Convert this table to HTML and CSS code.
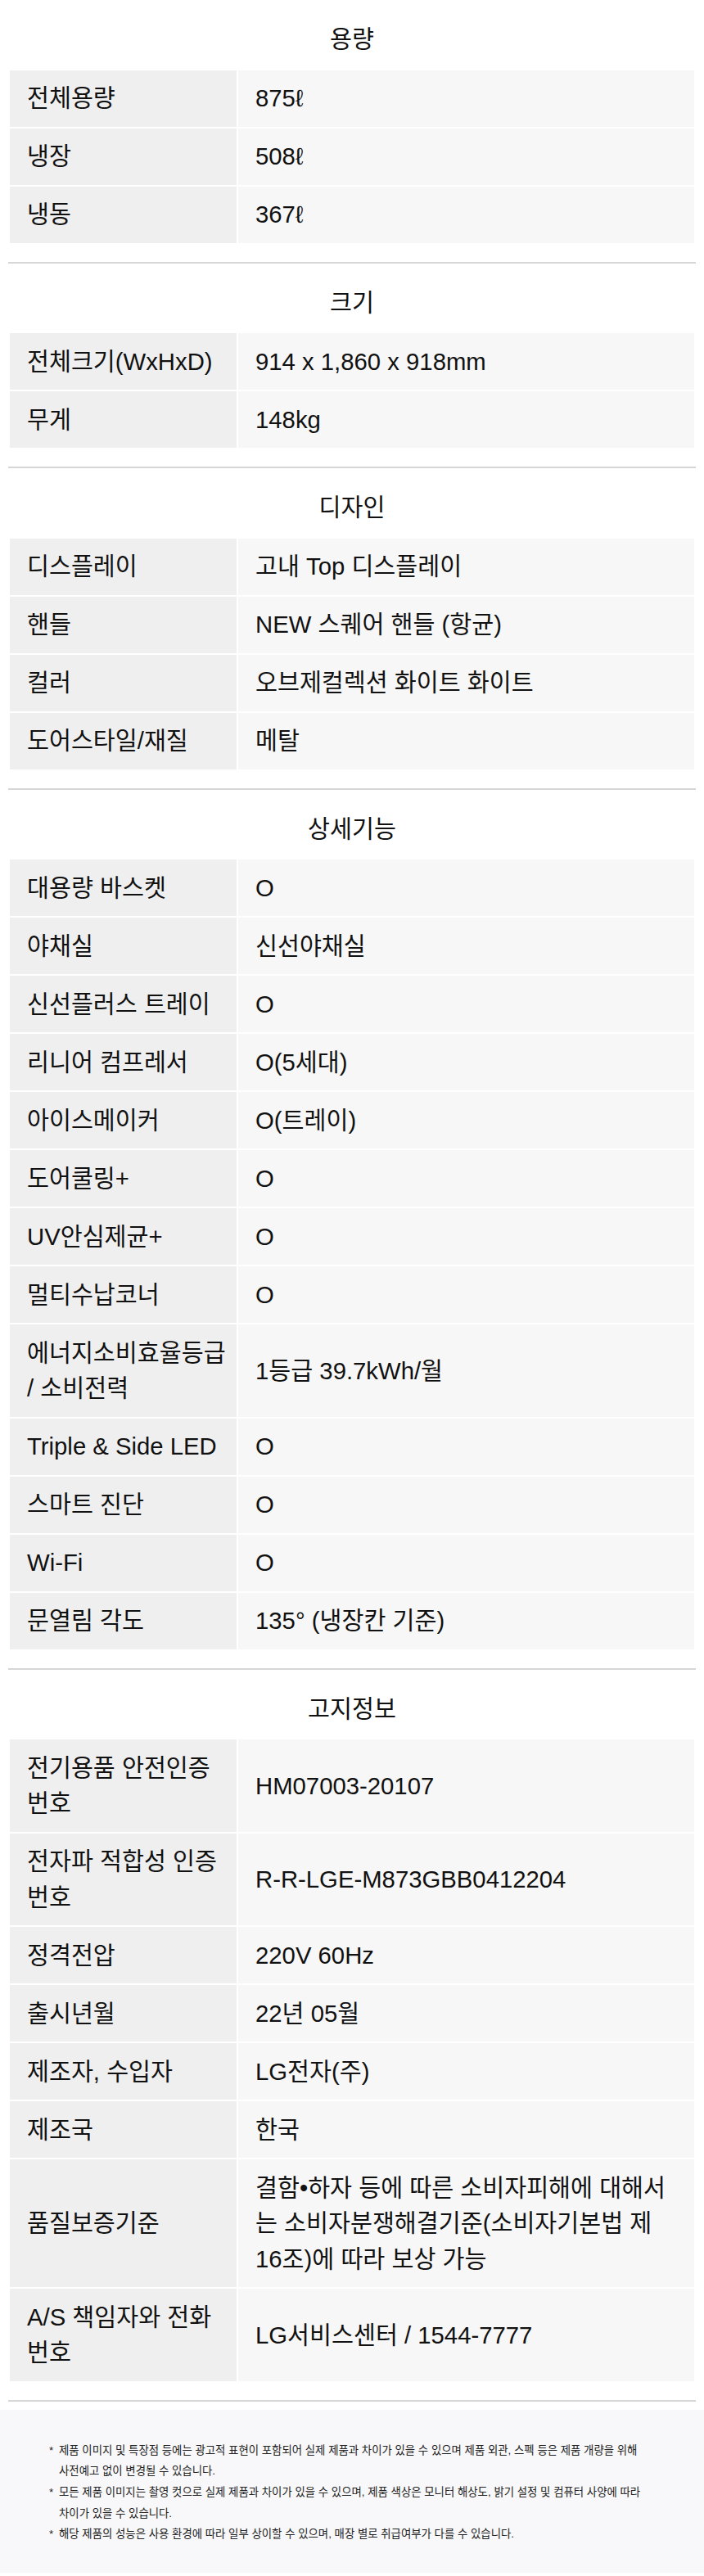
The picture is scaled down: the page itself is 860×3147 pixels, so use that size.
FILE: index.html
```html
<!DOCTYPE html>
<html lang="ko">
<head>
<meta charset="utf-8">
<title>제품 사양</title>
<link rel="stylesheet" href="styles.css">
</head>
<body>
<div class="spec">
  <section class="spec-section">
    <h2 class="spec-title">용량</h2>
    <table class="spec-table">
      <tr><th class="spec-label">전체용량</th><td class="spec-value">875ℓ</td></tr>
      <tr><th class="spec-label">냉장</th><td class="spec-value">508ℓ</td></tr>
      <tr><th class="spec-label">냉동</th><td class="spec-value">367ℓ</td></tr>
    </table>
  </section>

  <section class="spec-section">
    <h2 class="spec-title">크기</h2>
    <table class="spec-table">
      <tr><th class="spec-label">전체크기(WxHxD)</th><td class="spec-value">914 x 1,860 x 918mm</td></tr>
      <tr><th class="spec-label">무게</th><td class="spec-value">148kg</td></tr>
    </table>
  </section>

  <section class="spec-section">
    <h2 class="spec-title">디자인</h2>
    <table class="spec-table">
      <tr><th class="spec-label">디스플레이</th><td class="spec-value">고내 Top 디스플레이</td></tr>
      <tr><th class="spec-label">핸들</th><td class="spec-value">NEW 스퀘어 핸들 (항균)</td></tr>
      <tr><th class="spec-label">컬러</th><td class="spec-value">오브제컬렉션 화이트 화이트</td></tr>
      <tr><th class="spec-label">도어스타일/재질</th><td class="spec-value">메탈</td></tr>
    </table>
  </section>

  <section class="spec-section">
    <h2 class="spec-title">상세기능</h2>
    <table class="spec-table">
      <tr><th class="spec-label">대용량 바스켓</th><td class="spec-value">O</td></tr>
      <tr><th class="spec-label">야채실</th><td class="spec-value">신선야채실</td></tr>
      <tr><th class="spec-label">신선플러스 트레이</th><td class="spec-value">O</td></tr>
      <tr><th class="spec-label">리니어 컴프레서</th><td class="spec-value">O(5세대)</td></tr>
      <tr><th class="spec-label">아이스메이커</th><td class="spec-value">O(트레이)</td></tr>
      <tr><th class="spec-label">도어쿨링+</th><td class="spec-value">O</td></tr>
      <tr><th class="spec-label">UV안심제균+</th><td class="spec-value">O</td></tr>
      <tr><th class="spec-label">멀티수납코너</th><td class="spec-value">O</td></tr>
      <tr><th class="spec-label">에너지소비효율등급 / 소비전력</th><td class="spec-value">1등급 39.7kWh/월</td></tr>
      <tr><th class="spec-label">Triple &amp; Side LED</th><td class="spec-value">O</td></tr>
      <tr><th class="spec-label">스마트 진단</th><td class="spec-value">O</td></tr>
      <tr><th class="spec-label">Wi-Fi</th><td class="spec-value">O</td></tr>
      <tr><th class="spec-label">문열림 각도</th><td class="spec-value">135° (냉장칸 기준)</td></tr>
    </table>
  </section>

  <section class="spec-section">
    <h2 class="spec-title">고지정보</h2>
    <table class="spec-table">
      <tr><th class="spec-label">전기용품 안전인증 번호</th><td class="spec-value">HM07003-20107</td></tr>
      <tr><th class="spec-label">전자파 적합성 인증 번호</th><td class="spec-value">R-R-LGE-M873GBB0412204</td></tr>
      <tr><th class="spec-label">정격전압</th><td class="spec-value">220V 60Hz</td></tr>
      <tr><th class="spec-label">출시년월</th><td class="spec-value">22년 05월</td></tr>
      <tr><th class="spec-label">제조자, 수입자</th><td class="spec-value">LG전자(주)</td></tr>
      <tr><th class="spec-label">제조국</th><td class="spec-value">한국</td></tr>
      <tr><th class="spec-label">품질보증기준</th><td class="spec-value">결함•하자 등에 따른 소비자피해에 대해서는 소비자분쟁해결기준(소비자기본법 제16조)에 따라 보상 가능</td></tr>
      <tr><th class="spec-label">A/S 책임자와 전화 번호</th><td class="spec-value">LG서비스센터 / 1544-7777</td></tr>
    </table>
  </section>
</div>

<div class="notes">
  <ul class="notes-list">
    <li class="note"><span class="note-mark">*</span><span class="note-text">제품 이미지 및 특장점 등에는 광고적 표현이 포함되어 실제 제품과 차이가 있을 수 있으며 제품 외관, 스펙 등은 제품 개량을 위해 사전예고 없이 변경될 수 있습니다.</span></li>
    <li class="note"><span class="note-mark">*</span><span class="note-text">모든 제품 이미지는 촬영 컷으로 실제 제품과 차이가 있을 수 있으며, 제품 색상은 모니터 해상도, 밝기 설정 및 컴퓨터 사양에 따라 차이가 있을 수 있습니다.</span></li>
    <li class="note"><span class="note-mark">*</span><span class="note-text">해당 제품의 성능은 사용 환경에 따라 일부 상이할 수 있으며, 매장 별로 취급여부가 다를 수 있습니다.</span></li>
  </ul>
</div>
</body>
</html>
```

FILE: styles.css
```css
* {
  box-sizing: border-box;
}

html, body {
  margin: 0;
  padding: 0;
  background: #ffffff;
}

body {
  font-family: "Liberation Sans", "Noto Sans CJK KR", sans-serif;
  color: #000000;
}

.spec {
  padding: 0 10px;
}

.spec-section {
  border-bottom: 2px solid #d6d6d6;
  padding-bottom: 21px;
}

.spec-title {
  margin: 0;
  padding: 26px 0 14px;
  font-size: 29.3px;
  line-height: 43.5px;
  font-weight: 400;
  text-align: center;
  color: #111;
}

.spec-table {
  width: 100%;
  table-layout: fixed;
  border-collapse: separate;
  border-spacing: 2px;
}

.spec-label,
.spec-value {
  font-size: 29.3px;
  line-height: 43.5px;
  font-weight: 400;
  text-align: left;
  vertical-align: middle;
  color: #111;
}

.spec-label {
  width: 277px;
  background: #efefef;
  padding: 12.75px 0 12.75px 21px;
}

.spec-value {
  background: #f7f7f7;
  padding: 12.75px 24px 12.75px 21px;
}

.notes {
  margin-top: 10px;
  background: #f8f8fa;
  padding: 37px 60px 34px 60px;
}

.notes-list {
  list-style: none;
  margin: 0;
  padding: 0;
}

.note {
  display: flex;
  font-size: 13.4px;
  line-height: 25.7px;
  font-weight: 400;
  color: #222;
  word-break: keep-all;
}

.note-mark {
  flex: 0 0 12px;
  width: 12px;
}

.note-text {
  flex: 1 1 auto;
}
```
